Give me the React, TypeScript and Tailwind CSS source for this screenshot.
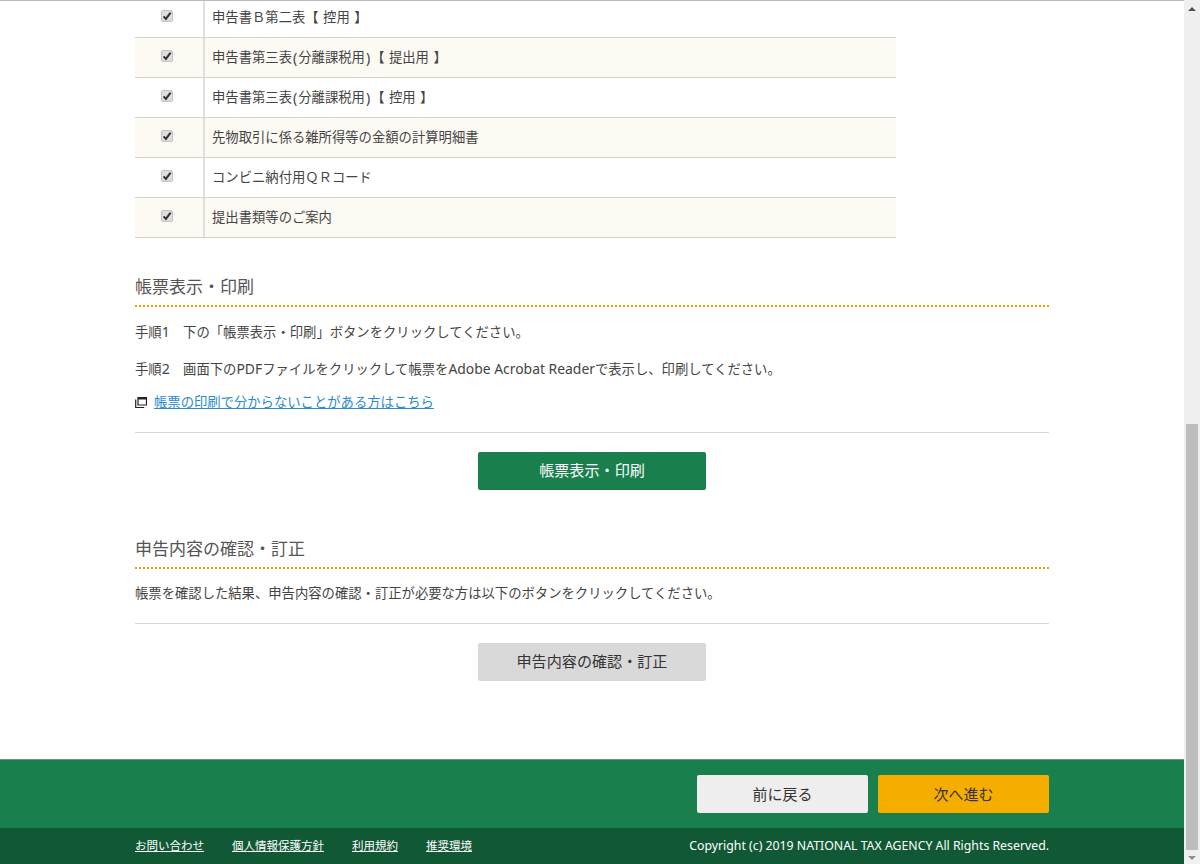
const font = "font-['Noto_Sans','Noto_Sans_CJK_JP',sans-serif]";

// latin runs are set a bit larger to get the width of the original's font
const rows = [
  <>申告書Ｂ第二表【 控用 】</>,
  <>申告書第三表<span className="mx-[1px] text-[14.2px]">(</span>分離課税用<span className="mx-[1px] text-[14.2px]">)</span>【 提出用 】</>,
  <>申告書第三表<span className="mx-[1px] text-[14.2px]">(</span>分離課税用<span className="mx-[1px] text-[14.2px]">)</span>【 控用 】</>,
  <>先物取引に係る雑所得等の金額の計算明細書</>,
  <>コンビニ納付用ＱＲコード</>,
  <>提出書類等のご案内</>,
];

const footerLinks = ["お問い合わせ", "個人情報保護方針", "利用規約", "推奨環境"];

/** chrome-style checked box. */
function Check() {
  return (
    <span className="-mt-[4px] flex h-[12px] w-[12px] items-center justify-center rounded-[2px] border border-[#c4c4c4] bg-[#dedede]">
      <svg viewBox="0 0 10 10" className="h-[10px] w-[10px]">
        <path d="M1.6 5.4 L3.9 7.9 L8.6 1.6" fill="none" stroke="#333" strokeWidth="2" />
      </svg>
    </span>
  );
}

function Heading({ children }: { children: string }) {
  return (
    <h2 className="h-[40px] border-b-2 border-dotted border-[#f39800] pt-[7px] text-[17px] leading-[25px] text-[#555]">
      {children}
    </h2>
  );
}

export default function App() {
  return (
    <div className={`flex h-[864px] w-[1200px] overflow-hidden bg-white text-[13.33px] text-[#444] ${font}`}>
      <div className="flex min-w-0 flex-1 flex-col">
        <div className="h-px shrink-0 bg-[#bbb]" />
        <main className="min-h-0 flex-1 overflow-hidden">
          <div className="mx-auto -mt-[3px] w-[914px]">
            {/* form list */}
            <div className="w-[761px]">
              {rows.map((label, i) => (
                <div
                  key={i}
                  className={`flex h-[40px] border-b border-[#d6d3cd] ${i % 2 === 1 ? "bg-[#fdfaf4]" : "bg-white"}`}
                >
                  <div className="flex w-[70px] shrink-0 items-center justify-center border-r-2 border-[#e2e0dc] pr-[5px]">
                    <Check />
                  </div>
                  <div className="flex items-center whitespace-pre pl-[7px] [word-spacing:1px]">{label}</div>
                </div>
              ))}
            </div>

            <section className="mt-[29px]">
              <Heading>帳票表示・印刷</Heading>
              <p className="mt-[15px] leading-[20px]">手順<span className="text-[14.2px]">1</span>　下の「帳票表示・印刷」ボタンをクリックしてください。</p>
              <p className="mt-[17px] leading-[20px]">
                手順<span className="text-[14.2px]">2</span>　画面下の<span className="text-[13.9px]">PDF</span>ファイルをクリックして帳票を<span className="text-[13.9px]">Adobe Acrobat Reader</span>で表示し、印刷してください。
              </p>
              <div className="mt-[13px] flex items-center gap-[7px] leading-[20px]">
                <svg viewBox="0 0 12 12" className="h-[12px] w-[12px]">
                  <path d="M3 1.5h8.5v7.5H3z" fill="none" stroke="#222" strokeWidth="1.2" />
                  <path d="M3 1.5h8.5v2H3z" fill="#222" />
                  <path d="M0.7 3.5v8h8.5" fill="none" stroke="#222" strokeWidth="1.2" />
                </svg>
                <a href="#" className="text-[#2a8ccb] underline">帳票の印刷で分からないことがある方はこちら</a>
              </div>
              <div className="mt-[20px] border-t border-[#d9d9d9] pt-[19px]">
                <button className="mx-auto block h-[38px] w-[228px] rounded-[2px] bg-[#19804d] pb-px text-[15.1px] text-white">
                  帳票表示・印刷
                </button>
              </div>
            </section>

            <section className="mt-[39px]">
              <Heading>申告内容の確認・訂正</Heading>
              <p className="mt-[14px] leading-[20px]">帳票を確認した結果、申告内容の確認・訂正が必要な方は以下のボタンをクリックしてください。</p>
              <div className="mt-[20px] border-t border-[#d9d9d9] pt-[19px]">
                <button className="mx-auto block h-[38px] w-[228px] rounded-[2px] bg-[#d9d9d9] pb-px text-[15.1px] text-[#333]">
                  申告内容の確認・訂正
                </button>
              </div>
            </section>
          </div>
        </main>

        <footer className="shrink-0">
          <div className="flex h-[69px] items-start justify-end gap-[10px] border-t border-[#5f9f7f] bg-[#19804d] pr-[135px] pt-[15px]">
            <button className="h-[38px] w-[171px] rounded-[2px] bg-[#eeeeee] text-[15px] text-[#333]">前に戻る</button>
            <button className="h-[38px] w-[171px] rounded-[2px] bg-[#f5ae00] text-[15px] text-[#333]">次へ進む</button>
          </div>
          <div className="flex h-[36px] items-center justify-between bg-[#115835] px-[135px] text-[11.5px] text-white">
            <div className="flex gap-[28px]">
              {footerLinks.map((link) => (
                <a key={link} href="#" className="underline">{link}</a>
              ))}
            </div>
            <span className="text-[12.3px]">Copyright (c) 2019 NATIONAL TAX AGENCY All Rights Reserved.</span>
          </div>
        </footer>
      </div>

      {/* scrollbar */}
      <div className="flex w-[16px] shrink-0 flex-col items-center bg-[#f0f0f0]">
        <div className="flex h-[17px] w-full items-center justify-center">
          <span className="h-0 w-0 border-x-[4px] border-b-[4px] border-x-transparent border-b-[#505050]" />
        </div>
        <div className="mt-[407px] h-[426px] w-[12px] shrink-0 bg-[#bdbdbd]" />
        <div className="flex h-[14px] w-full items-center justify-center pt-[2px]">
          <span className="h-0 w-0 border-x-[4px] border-t-[4px] border-x-transparent border-t-[#8f8f8f]" />
        </div>
      </div>
    </div>
  );
}
